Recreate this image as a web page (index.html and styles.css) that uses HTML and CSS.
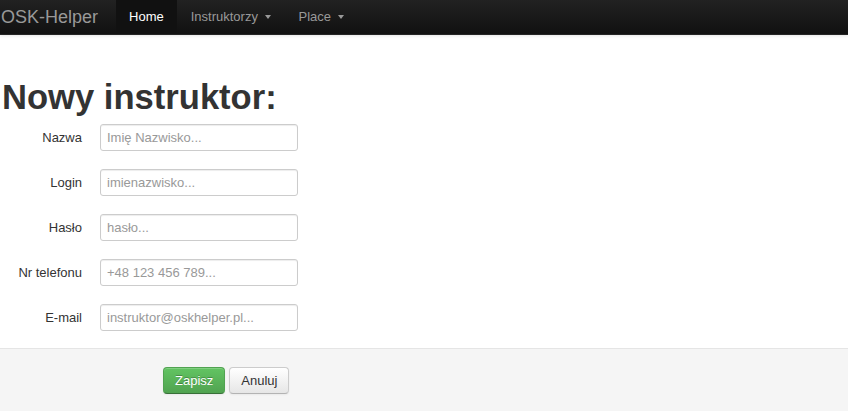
FILE: index.html
```html
<!DOCTYPE html>
<html>
<head>
<meta charset="utf-8">
<link rel="stylesheet" href="styles.css">
</head>
<body>
<div class="navbar">
  <a class="brand">OSK-Helper</a>
  <ul class="nav">
    <li class="active"><a>Home</a></li>
    <li><a class="toggle">Instruktorzy <b class="caret"></b></a></li>
    <li><a class="toggle">Place <b class="caret"></b></a></li>
  </ul>
</div>
<div class="content">
  <h1>Nowy instruktor:</h1>
  <form class="form">
    <div class="row"><label>Nazwa</label><input type="text" placeholder="Imię Nazwisko..."></div>
    <div class="row"><label>Login</label><input type="text" placeholder="imienazwisko..."></div>
    <div class="row"><label>Hasło</label><input type="text" placeholder="hasło..."></div>
    <div class="row"><label>Nr telefonu</label><input type="text" placeholder="+48 123 456 789..."></div>
    <div class="row"><label>E-mail</label><input type="text" placeholder="instruktor@oskhelper.pl..."></div>
    <div class="actions">
      <button type="button" class="btn btn-success">Zapisz</button>
      <button type="button" class="btn">Anuluj</button>
    </div>
  </form>
</div>
</body>
</html>
```
FILE: styles.css
```css
* { box-sizing: border-box; }
body {
  margin: 0;
  font-family: "Liberation Sans", Arial, sans-serif;
  font-size: 13px;
  color: #333;
  background: #fff;
}
.navbar {
  height: 35px;
  display: flex;
  align-items: stretch;
  background: linear-gradient(#222, #111);
  border-bottom: 1px solid #252525;
  box-shadow: 0 1px 3px rgba(0,0,0,0.1);
}
.brand {
  font-size: 18px;
  line-height: 34px;
  color: #999;
  padding: 0 18px 0 1px;
}
.nav {
  list-style: none;
  margin: 0;
  padding: 0;
  display: flex;
}
.nav li a {
  display: block;
  line-height: 34px;
  padding: 0 13px;
  color: #999;
  font-size: 13px;
}
.nav li a.toggle {
  padding: 0 14px 0 14px;
}
.nav li.active a {
  background: #111;
  color: #fff;
}
.caret {
  display: inline-block;
  width: 0;
  height: 0;
  border-top: 4px solid #999;
  border-left: 3.5px solid transparent;
  border-right: 3.5px solid transparent;
  vertical-align: middle;
  margin-left: 3px;
  margin-top: -2px;
}
.content { padding: 0; }
h1 {
  margin: 40px 0 0 2px;
  font-size: 34.6px;
  font-weight: bold;
  line-height: 44px;
  color: #333;
}
.form { margin-top: 5px; }
.row {
  display: flex;
  align-items: center;
  height: 27px;
  margin-bottom: 18px;
}
.row label {
  width: 82px;
  text-align: right;
  margin-right: 18px;
  color: #333;
}
.row input {
  width: 198px;
  height: 27px;
  border: 1px solid #ccc;
  border-radius: 3px;
  padding: 0 6px;
  font-family: "Liberation Sans", Arial, sans-serif;
  font-size: 13px;
  color: #555;
  box-shadow: inset 0 1px 1px rgba(0,0,0,0.075);
}
.row input::placeholder { color: #999; }
.actions {
  margin-top: -1px;
  background: #f5f5f5;
  border-top: 1px solid #e5e5e5;
  padding: 18px 20px 17px 163px;
  display: flex;
  gap: 4px;
}
.btn {
  height: 27px;
  padding: 0 11px;
  font-family: "Liberation Sans", Arial, sans-serif;
  font-size: 13px;
  color: #333;
  border: 1px solid #ccc;
  border-bottom-color: #b3b3b3;
  border-radius: 4px;
  background: linear-gradient(#fff, #e6e6e6);
  box-shadow: inset 0 1px 0 rgba(255,255,255,0.2), 0 1px 2px rgba(0,0,0,0.05);
}
.btn-success {
  color: #fff;
  background: linear-gradient(#62c462, #51a351);
  border-color: #51a351 #51a351 #387038;
  text-shadow: 0 -1px 0 rgba(0,0,0,0.25);
}
```
